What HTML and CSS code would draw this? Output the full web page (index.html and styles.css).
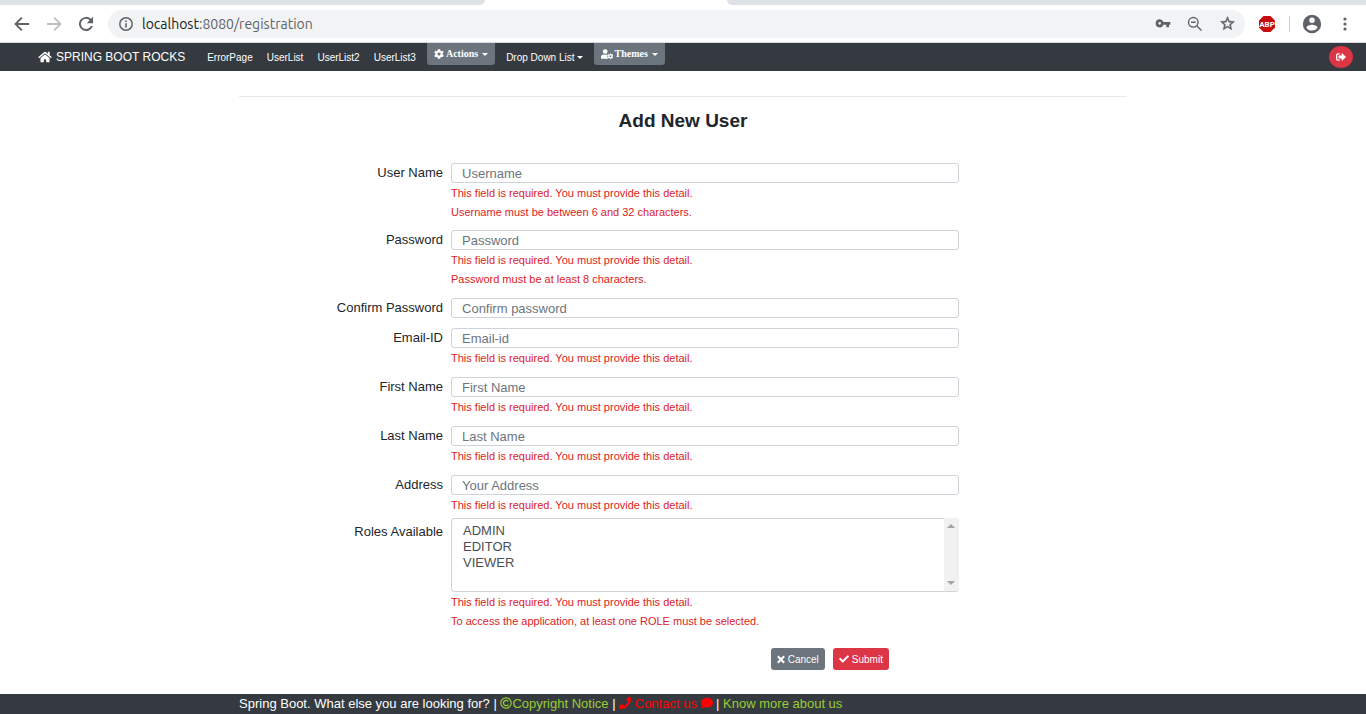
FILE: index.html
```
<!DOCTYPE html>
<html lang="en">
<head>
<meta charset="utf-8">
<title>Add New User</title>
<link rel="stylesheet" href="styles.css">
</head>
<body>
<div class="browser">
  <div class="tabs"><span class="tabs-left"></span><span class="tabs-right"></span></div>
  <div class="toolbar">
    <button class="tool" type="button" aria-label="Back"><svg width="20" height="20" viewBox="0 0 24 24"><path fill="#5f6368" d="M20.500 10.800H7l5.700-5.700L11 3.500 2.700 12l8.300 8.500 1.700-1.600L7 13.200h13.500z"/></svg></button>
    <button class="tool" type="button" aria-label="Forward"><svg width="20" height="20" viewBox="0 0 24 24"><path fill="#bdc1c6" d="M3.500 10.800H17l-5.700-5.700L13 3.500l8.300 8.500-8.300 8.500-1.700-1.600 5.700-5.700H3.500z"/></svg></button>
    <button class="tool" type="button" aria-label="Reload"><svg width="20" height="20" viewBox="0 0 24 24"><path fill="#5f6368" d="M18 5.800A8.500 8.500 0 1 0 20.200 14.500h-2.500A6.200 6.200 0 1 1 16.400 7.400L13 11h7.500V3.300z"/></svg></button>
    <div class="address">
      <svg width="16" height="16" viewBox="0 0 16 16"><circle cx="8" cy="8" r="6.200" fill="none" stroke="#5f6368" stroke-width="1.500"/><path fill="#5f6368" d="M7.200 7.200h1.600v4.200H7.200zM7.200 4.500h1.600v1.600H7.200z"/></svg>
      <span class="url"><b>localhost</b>:8080/registration</span>
      <button class="tool tool-small" type="button" aria-label="Saved passwords"><svg width="16" height="16" viewBox="0 0 24 24"><path fill="#5f6368" d="M12.650 9A6 6 0 0 0 7 5a6 6 0 1 0 5.650 8H17v4h4v-4h2V9zM7 13a2 2 0 1 1 0-4 2 2 0 0 1 0 4z"/></svg></button>
      <button class="tool tool-small" type="button" aria-label="Zoom"><svg width="16" height="16" viewBox="0 0 16 16"><g fill="none" stroke="#5f6368" stroke-width="1.400"><circle cx="6.300" cy="6.300" r="4.800"/><path d="M9.900 9.900l4.600 4.600M4 6.300h4.600"/></g></svg></button>
      <button class="tool tool-small" type="button" aria-label="Bookmark"><svg width="17" height="17" viewBox="0 0 24 24"><path fill="#5f6368" stroke="#5f6368" stroke-width=".6" d="M22 9.240l-7.190-.62L12 2 9.190 8.630 2 9.240l5.460 4.730L5.820 21 12 17.270 18.180 21l-1.630-7.030zM12 15.400l-3.760 2.270 1-4.280-3.320-2.880 4.380-.38L12 6.100l1.710 4.040 4.380.38-3.320 2.880 1 4.280z"/></svg></button>
    </div>
    <button class="tool abp" type="button" aria-label="ABP"><svg width="18" height="18" viewBox="0 0 18 18"><path fill="#c70d0d" d="M5.500 1h7L17 5.500v7L12.500 17h-7L1 12.500v-7z"/><text class="abp-text" x="9" y="12" text-anchor="middle">ABP</text></svg></button>
    <span class="divider"></span>
    <button class="tool profile" type="button" aria-label="Profile"><svg width="22" height="22" viewBox="0 0 24 24"><path fill="#5f6368" d="M12 2a10 10 0 1 0 0 20 10 10 0 0 0 0-20zm0 3a3 3 0 1 1 0 6 3 3 0 0 1 0-6zm0 14.200a7.200 7.200 0 0 1-6-3.220c.03-1.990 4-3.080 6-3.080s5.970 1.090 6 3.080a7.200 7.200 0 0 1-6 3.220z"/></svg></button>
    <button class="tool menu" type="button" aria-label="Menu"><svg width="16" height="16" viewBox="0 0 16 16"><g fill="#5f6368"><circle cx="8" cy="3" r="1.600"/><circle cx="8" cy="8" r="1.600"/><circle cx="8" cy="13" r="1.600"/></g></svg></button>
  </div>
</div>

<nav class="navbar">
  <a class="brand" href="#"><svg width="14" height="12" viewBox="0 0 576 512"><path fill="currentColor" d="M280.400 148.300L96 300.100V464a16 16 0 0 0 16 16l112-.3a16 16 0 0 0 16-16V368a16 16 0 0 1 16-16h64a16 16 0 0 1 16 16v95.600a16 16 0 0 0 16 16.100l112 .3a16 16 0 0 0 16-16V300L295.700 148.300a12.200 12.200 0 0 0-15.300 0zM571.600 251.500L488 182.600V44a12 12 0 0 0-12-12h-56a12 12 0 0 0-12 12v72.600L318.500 43a48 48 0 0 0-61 0L4.300 251.500a12 12 0 0 0-1.600 16.900l25.500 31a12 12 0 0 0 16.900 1.600l235.200-193.700a12.200 12.200 0 0 1 15.300 0L530.900 301a12 12 0 0 0 16.900-1.600l25.500-31a12 12 0 0 0-1.700-16.900z"/></svg>SPRING BOOT ROCKS</a>
  <div class="links">
    <a href="#">ErrorPage</a><a href="#">UserList</a><a href="#">UserList2</a><a href="#">UserList3</a>
  </div>
  <button class="nav-button" type="button"><svg width="10" height="10" viewBox="0 0 512 512"><path fill="currentColor" fill-rule="evenodd" d="M487.400 315.700l-42.600-24.600c4.300-23.200 4.300-47 0-70.200l42.600-24.600c4.900-2.800 7.100-8.600 5.500-14-11.100-35.600-30-67.800-54.700-94.600-3.800-4.100-10-5.100-14.800-2.300L380.800 110c-17.900-15.400-38.500-27.300-60.800-35.100V25.800c0-5.600-3.900-10.500-9.400-11.700-36.700-8.200-74.300-7.800-109.200 0-5.500 1.200-9.400 6.100-9.400 11.700V75c-22.200 7.900-42.800 19.800-60.800 35.100L88.700 85.500c-4.900-2.800-11-1.900-14.800 2.300-24.700 26.700-43.600 58.900-54.700 94.600-1.700 5.400.6 11.200 5.500 14L67.300 221c-4.300 23.200-4.300 47 0 70.200l-42.600 24.600c-4.900 2.800-7.100 8.600-5.500 14 11.100 35.600 30 67.800 54.700 94.600 3.800 4.100 10 5.100 14.800 2.300l42.600-24.600c17.900 15.400 38.500 27.300 60.800 35.100v49.200c0 5.600 3.900 10.500 9.400 11.700 36.700 8.200 74.300 7.800 109.200 0 5.500-1.200 9.400-6.100 9.400-11.700v-49.200c22.200-7.900 42.800-19.800 60.800-35.100l42.600 24.600c4.900 2.800 11 1.900 14.800-2.300 24.700-26.700 43.600-58.900 54.700-94.600 1.500-5.500-.7-11.300-5.600-14.100zM256 336a80 80 0 1 1 0-160 80 80 0 0 1 0 160z"/></svg>Actions<i class="caret"></i></button>
  <button class="nav-drop" type="button">Drop Down List<i class="caret"></i></button>
  <button class="nav-button" type="button"><svg width="12" height="10" viewBox="0 0 640 512"><path fill="currentColor" d="M224 256a128 128 0 1 0 0-256 128 128 0 0 0 0 256zM134 288A134 134 0 0 0 0 422v42a48 48 0 0 0 48 48h340a200 200 0 0 1-30-215 130 130 0 0 0-44-9h-17a174 174 0 0 1-146 0z"/><path fill="currentColor" fill-rule="evenodd" d="M475 224h66l10 44 31 18 43-13 32 56-33 31v36l33 31-32 56-43-13-31 18-10 44h-66l-10-44-31-18-43 13-32-56 33-31v-36l-33-31 32-56 43 13 31-18zM508 328a50 50 0 1 0 0 100 50 50 0 0 0 0-100z"/></svg>Themes<i class="caret"></i></button>
  <button class="logout" type="button" aria-label="Log out"><svg width="10" height="10" viewBox="0 0 512 512"><path fill="currentColor" d="M497 273L329 441c-15 15-41 4.500-41-17v-96H152a24 24 0 0 1-24-24v-96a24 24 0 0 1 24-24h136V88c0-21.400 25.900-32 41-17l168 168c9.300 9.400 9.300 24.600 0 34zM192 436v-40a12 12 0 0 0-12-12H96a32 32 0 0 1-32-32V160a32 32 0 0 1 32-32h84a12 12 0 0 0 12-12V76a12 12 0 0 0-12-12H96a96 96 0 0 0-96 96v192a96 96 0 0 0 96 96h84a12 12 0 0 0 12-12z"/></svg></button>
</nav>

<main class="container">
  <hr class="rule">
  <h1 class="title">Add New User</h1>
  <form class="form">
    <div class="row row-first"><label for="username">User Name</label><div><input class="control" id="username" type="text" placeholder="Username"><p class="error">This field is required. You must provide this detail.</p><p class="error">Username must be between 6 and 32 characters.</p></div></div>
    <div class="row"><label for="password">Password</label><div><input class="control" id="password" type="password" placeholder="Password"><p class="error">This field is required. You must provide this detail.</p><p class="error">Password must be at least 8 characters.</p></div></div>
    <div class="row"><label for="confirm">Confirm Password</label><div><input class="control" id="confirm" type="password" placeholder="Confirm password"></div></div>
    <div class="row"><label for="email">Email-ID</label><div><input class="control" id="email" type="text" placeholder="Email-id"><p class="error">This field is required. You must provide this detail.</p></div></div>
    <div class="row"><label for="first">First Name</label><div><input class="control" id="first" type="text" placeholder="First Name"><p class="error">This field is required. You must provide this detail.</p></div></div>
    <div class="row"><label for="last">Last Name</label><div><input class="control" id="last" type="text" placeholder="Last Name"><p class="error">This field is required. You must provide this detail.</p></div></div>
    <div class="row row-address"><label for="address">Address</label><div><input class="control" id="address" type="text" placeholder="Your Address"><p class="error">This field is required. You must provide this detail.</p></div></div>
    <div class="row row-roles"><label for="roles">Roles Available</label><div>
      <div class="list">
        <select class="roles" id="roles" multiple size="4"><option>ADMIN</option><option>EDITOR</option><option>VIEWER</option></select>
        <span class="track"><i class="arrow arrow-up"></i><i class="arrow arrow-down"></i></span>
      </div>
      <p class="error">This field is required. You must provide this detail.</p><p class="error">To access the application, at least one ROLE must be selected.</p></div></div>
    <div class="row"><div class="actions">
      <button class="btn btn-cancel" type="button"><svg width="8" height="9" viewBox="0 0 352 352"><path fill="none" stroke="currentColor" stroke-width="92" d="M38 38l276 276M314 38L38 314"/></svg>Cancel</button>
      <button class="btn btn-submit" type="submit"><svg width="10" height="10" viewBox="0 0 512 512"><path fill="currentColor" d="M173.900 439.400L7.500 273c-10-10-10-26.200 0-36.200l36.200-36.200c10-10 26.200-10 36.200 0L192 312.700 432.100 72.600c10-10 26.200-10 36.200 0l36.200 36.200c10 10 10 26.200 0 36.200L210.100 439.400c-10 10-26.200 10-36.200 0z"/></svg>Submit</button>
    </div></div>
  </form>
</main>

<footer class="footer">
  <div class="container">Spring Boot. What else you are looking for? | <a class="green" href="#"><svg width="12" height="12" viewBox="0 0 512 512"><g fill="none" stroke="currentColor" stroke-width="50"><circle cx="256" cy="256" r="222"/><path d="M352 320a112 112 0 1 1 0-128" stroke-width="56"/></g></svg>Copyright Notice</a> | <a class="red" href="#"><svg width="12" height="12" viewBox="0 0 512 512"><path fill="#f00" d="M493.400 24.600l-104-24c-11.300-2.600-22.900 3.300-27.500 13.900l-48 112c-4.200 9.800-1.400 21.300 6.900 28l60.600 49.600c-36 76.700-98.900 140.500-177.200 177.200l-49.600-60.600c-6.800-8.300-18.200-11.100-28-6.900l-112 48C3.900 366.500-2 378.100.6 389.400l24 104C27.100 504.200 36.700 512 48 512c256.100 0 464-207.500 464-464 0-11.200-7.700-20.900-18.600-23.400z"/></svg> Contact us <svg width="12" height="12" viewBox="0 0 512 512"><path fill="#f00" d="M256 32C114.600 32 0 125.100 0 240c0 49.600 21.400 95 57 130.700C44.500 421.100 2.700 466 2.200 466.500c-2.200 2.300-2.800 5.700-1.500 8.700S4.800 480 8 480c66.300 0 116-31.800 140.600-51.400 32.700 12.300 69 19.400 107.400 19.400 141.400 0 256-93.100 256-208S397.400 32 256 32z"/></svg></a> | <a class="green" href="#">Know more about us</a></div>
</footer>
</body>
</html>
```
FILE: styles.css
```
* { box-sizing: border-box; }
body {
  margin: 0;
  min-height: 100vh;
  display: flex;
  flex-direction: column;
  background: #fff;
  color: #212529;
  font: 13px/20px "Liberation Sans", Arial, sans-serif;
}
button { font-family: inherit; border: 0; margin: 0; cursor: pointer; }
a { color: inherit; text-decoration: none; }
svg { display: block; flex: none; }

/* Browser toolbar */
.browser { border-bottom: 1px solid #d5dbdc; }
.tabs { display: flex; justify-content: space-between; height: 5px; }
.tabs span { background: #dee1e6; }
.tabs-left { width: 485px; border-bottom-right-radius: 5px; }
.tabs-right { width: calc(100% - 727px); border-bottom-left-radius: 5px; }
.toolbar { display: flex; align-items: center; height: 37px; padding: 0 13px 0 12px; }
.tool { display: flex; align-items: center; justify-content: center; padding: 0; background: none; width: 20px; height: 28px; margin-right: 12px; }
.address {
  flex: 1;
  display: flex;
  align-items: center;
  height: 28px;
  padding: 0 10px;
  border-radius: 14px;
  background: #f1f3f4;
}
.url { flex: 1; padding-left: 8px; color: #5f6368; font: 14px/20px Ubuntu, "Noto Sans", sans-serif; }
.url b { font-weight: normal; color: #202124; }
.tool-small { width: 16px; margin: 0 0 0 16px; }
.abp { width: 18px; margin: 0 13px; }
.abp-text { fill: #fff; font: bold 8px Roboto, Arial, sans-serif; }
.divider { width: 1px; height: 16px; background: #cfd1d4; }
.profile { width: 22px; margin: 0 14px 0 11px; }
.menu { width: 16px; margin: 0; }

/* Navigation */
.navbar { display: flex; align-items: flex-start; height: 28px; padding: 0 13px 0 38px; background: #343a40; color: #fff; }
.brand { display: flex; align-items: center; gap: 4px; height: 28px; margin-right: 22px; font-size: 12px; }
.links { display: flex; gap: 14px; margin-right: 11px; font-size: 10px; line-height: 29px; }
.nav-button {
  display: flex;
  align-items: center;
  gap: 2px;
  height: 22px;
  padding: 0 7px;
  border-radius: 0 0 3px 3px;
  background: #6c757d;
  color: #fff;
  font: bold 10px/20px "Liberation Serif", serif;
}
.nav-drop { display: flex; align-items: center; gap: 2px; height: 29px; margin: 0 11px; padding: 0; background: none; color: #fff; font-size: 10px; }
.caret { border: 3px solid transparent; border-top-color: currentColor; border-bottom: 0; }
.nav-button .caret { margin-left: 2px; }
.logout { display: flex; align-items: center; justify-content: center; width: 24px; height: 22px; margin: 3px 0 0 auto; padding: 0; border-radius: 50%; background: #dc3545; color: #fff; }

/* Form */
.container { width: 65%; margin: 0 auto; }
main.container { flex: 1; }
.rule { height: 1px; margin: 25px 0 0; border: 0; background: #e9e9e9; }
.title { margin: 12px 0 30px; font-size: 19px; line-height: 24px; text-align: center; }
.row { display: grid; grid-template-columns: 51fr 127fr 40fr; column-gap: 8px; margin-bottom: 10px; }
.row label { text-align: right; line-height: 20px; }
.row-first { margin-bottom: 9px; }
.row-address { margin-bottom: 4px; }
.row-roles { margin-bottom: 18px; }
.row-roles label { padding-top: 4px; }
.control, .roles {
  display: block;
  width: 100%;
  border: 1px solid #ced4da;
  border-radius: 3px;
  background: #fff;
  color: #495057;
  font: 13px/16px "Liberation Sans", Arial, sans-serif;
}
.control { height: 20px; padding: 0 10px; }
.control::placeholder { color: #6c757d; opacity: 1; }
.error { margin: 0; padding-top: 1px; color: #dc1c24; font-size: 11px; line-height: 18px; }
.list { position: relative; }
.roles { height: 74px; padding: 4px 9px; overflow: hidden; }
.roles option { min-height: 16px; padding: 0 2px; }
.track {
  position: absolute;
  top: 0;
  right: 0;
  bottom: 1px;
  width: 15px;
  display: flex;
  flex-direction: column;
  justify-content: space-between;
  align-items: center;
  padding: 6px 0;
  border-radius: 0 3px 3px 0;
  background: #f1f1f1;
  pointer-events: none;
}
.arrow { border: 4px solid transparent; }
.arrow-up { border-top: 0; border-bottom-color: #a3a3a3; }
.arrow-down { border-bottom: 0; border-top-color: #a3a3a3; }
.actions { grid-column: 2; display: flex; justify-content: flex-end; gap: 8px; padding-right: 70px; }
.btn { display: flex; align-items: center; gap: 3px; height: 22px; padding: 0 6px; border-radius: 3px; color: #fff; font-size: 10px; }
.btn-cancel { background: #6c757d; }
.btn-submit { background: #dc3545; }

/* Footer */
.footer { background: #343a40; color: #fff; }
.footer svg { display: inline-block; vertical-align: -1px; }
.green { color: #9acd32; }
.red { color: #f00; }
```
